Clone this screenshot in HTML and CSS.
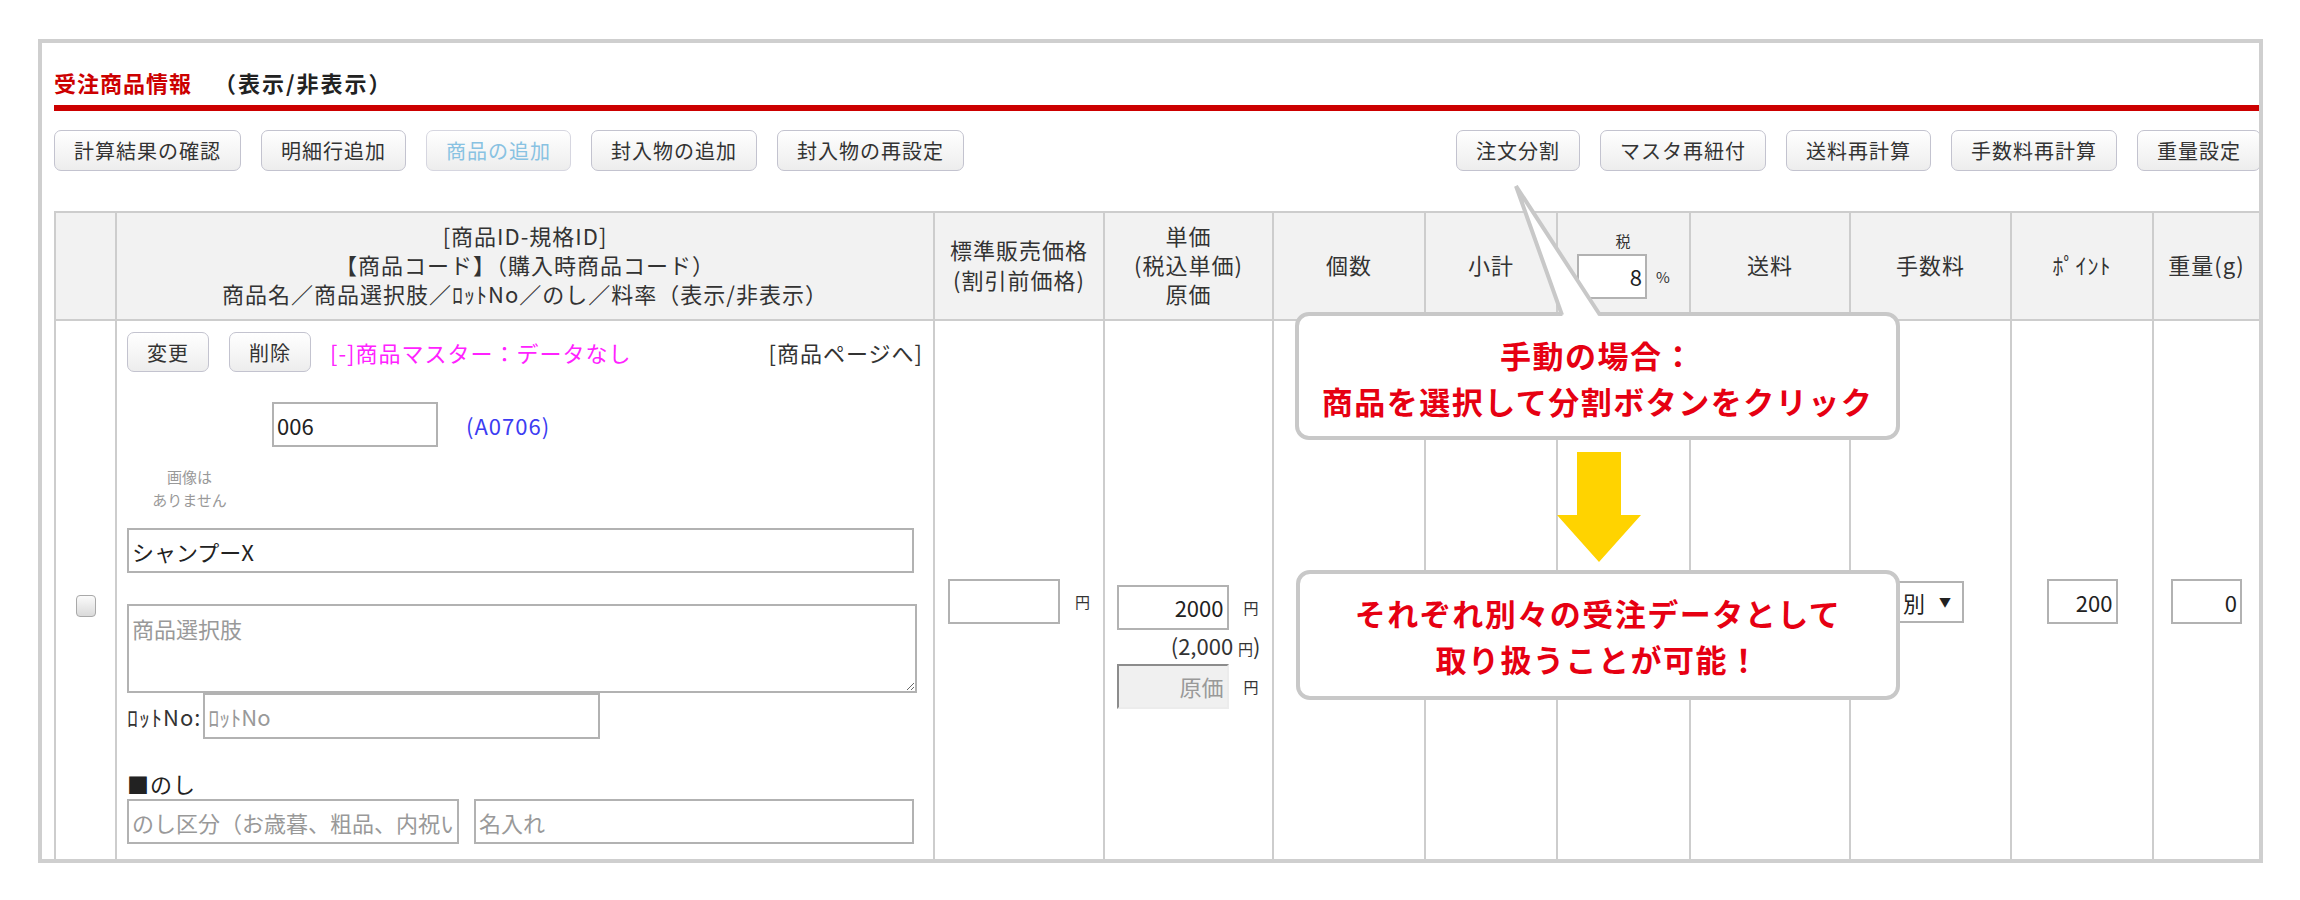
FILE: index.html
```html
<!DOCTYPE html>
<html lang="ja">
<head>
  <meta charset="UTF-8">
  <title>受注商品情報</title>
  <link rel="stylesheet" href="styles.css">
</head>
<body>
  <div class="panel">
    <h2 class="panel-title">受注商品情報<span class="toggle">（表示/非表示）</span></h2>

    <div class="toolbar">
      <div class="btn-group">
        <button class="btn">計算結果の確認</button>
        <button class="btn">明細行追加</button>
        <button class="btn" disabled>商品の追加</button>
        <button class="btn">封入物の追加</button>
        <button class="btn">封入物の再設定</button>
      </div>
      <div class="btn-group">
        <button class="btn">注文分割</button>
        <button class="btn">マスタ再紐付</button>
        <button class="btn">送料再計算</button>
        <button class="btn">手数料再計算</button>
        <button class="btn">重量設定</button>
      </div>
    </div>

    <table class="items">
      <colgroup>
        <col class="c-check">
        <col class="c-product">
        <col class="c-list">
        <col class="c-unit">
        <col class="c-qty">
        <col class="c-sub">
        <col class="c-tax">
        <col class="c-ship">
        <col class="c-fee">
        <col class="c-point">
        <col class="c-weight">
      </colgroup>
      <thead>
        <tr>
          <th></th>
          <th>[商品ID-規格ID]<br>【商品コード】（購入時商品コード）<br>商品名／商品選択肢／ﾛｯﾄNo／のし／料率（表示/非表示）</th>
          <th class="th-two">標準販売価格<br>(割引前価格)</th>
          <th>単価<br>(税込単価)<br>原価</th>
          <th>個数</th>
          <th>小計</th>
          <th class="tax-head">
            <div class="tax-label">税</div>
            <input class="field num-field tax-field" value="8"><span class="pct">%</span>
          </th>
          <th>送料</th>
          <th>手数料</th>
          <th>ﾎﾟｲﾝﾄ</th>
          <th>重量(g)</th>
        </tr>
      </thead>
      <tbody>
        <tr>
          <td><input type="checkbox" class="row-check"></td>
          <td class="product-cell">
            <div class="product-actions">
              <button class="btn btn-small">変更</button>
              <button class="btn btn-small">削除</button>
              <span class="master-missing">[-]商品マスター：データなし</span>
              <a class="product-link">[商品ページへ]</a>
            </div>
            <div class="code-row">
              <input class="field code-field" value="006">
              <span class="code-sub">(A0706)</span>
            </div>
            <div class="no-image">画像は<br>ありません</div>
            <input class="field name-field" value="シャンプーX">
            <textarea class="field option-field" placeholder="商品選択肢"></textarea>
            <div class="lot-row">ﾛｯﾄNo:<input class="field lot-field" placeholder="ﾛｯﾄNo"></div>
            <div class="noshi-label">■のし</div>
            <div class="noshi-row">
              <input class="field noshi-kind" placeholder="のし区分（お歳暮、粗品、内祝い）">
              <input class="field noshi-name" placeholder="名入れ">
            </div>
          </td>
          <td><input class="field num-field price-field"><span class="yen">円</span></td>
          <td class="unit-cell">
            <div class="unit-box">
              <div class="unit-line"><input class="field num-field price-field" value="2000"><span class="yen">円</span></div>
              <div class="tax-in">(2,000 <span class="yen-inline">円</span>)</div>
              <div class="unit-line"><input class="field num-field price-field cost-field" placeholder="原価" disabled><span class="yen">円</span></div>
            </div>
          </td>
          <td></td>
          <td></td>
          <td></td>
          <td></td>
          <td><div class="select-box"><span>別</span><span class="caret">▼</span></div></td>
          <td><input class="field num-field small-field" value="200"></td>
          <td><input class="field num-field small-field" value="0"></td>
        </tr>
      </tbody>
    </table>

    <div class="callout callout-top">
      <svg class="callout-tail" width="110" height="140" viewBox="0 0 110 140">
        <polygon points="12,4 59,135 96,135" fill="#fff"/>
        <polyline points="58,133 12,4 96,133" fill="none" stroke="#c8c8c8" stroke-width="4"/>
      </svg>
      <p>手動の場合：<br>商品を選択して分割ボタンをクリック</p>
    </div>

    <svg class="down-arrow" width="84" height="110" viewBox="0 0 84 110">
      <polygon points="20,0 64,0 64,63 84,63 42,110 0,63 20,63" fill="#ffd300"/>
    </svg>

    <div class="callout callout-bottom">
      <p>それぞれ別々の受注データとして<br>取り扱うことが可能！</p>
    </div>
  </div>
</body>
</html>
```

FILE: styles.css
```css
body {
  margin: 0;
  background: #fff;
  font-family: "Noto Sans CJK JP", "Noto Sans", sans-serif;
  color: #333;
}
.panel {
  position: relative;
  box-sizing: border-box;
  width: 2225px;
  height: 824px;
  margin: 39px 0 0 38px;
  padding-left: 12px;
  border: 4px solid #cfcfcf;
  overflow: hidden;
}
.panel-title {
  margin: 0;
  height: 26px;
  padding: 26px 0 10px;
  line-height: 26px;
  font-size: 22px;
  letter-spacing: 1px;
  color: #cc0000;
  border-bottom: 6px solid #cc0000;
}
.toggle {
  margin-left: 22px;
  letter-spacing: 2px;
  color: #222;
}

/* buttons */
.toolbar {
  display: flex;
  justify-content: space-between;
  margin-top: 19px;
  margin-right: -2px;
}
.btn-group {
  display: flex;
  gap: 20px;
}
.btn {
  height: 41px;
  padding: 0 19px;
  border: 1px solid #c3c3cf;
  border-radius: 7px;
  background: linear-gradient(#ffffff, #ededed);
  font-family: inherit;
  font-size: 20px;
  letter-spacing: 1px;
  color: #333;
  white-space: nowrap;
}
.btn:disabled {
  color: #88c2e2;
  border-color: #d6d6e0;
}
.btn-small {
  height: 40px;
}

/* table */
.items {
  margin-top: 40px;
  width: 2205px;
  table-layout: fixed;
  border-collapse: collapse;
  font-size: 22px;
  letter-spacing: 1px;
}
.c-check { width: 61px; }
.c-product { width: 818px; }
.c-list { width: 170px; }
.c-unit { width: 169px; }
.c-qty { width: 152px; }
.c-sub { width: 132px; }
.c-tax { width: 133px; }
.c-ship { width: 160px; }
.c-fee { width: 161px; }
.c-point { width: 142px; }
.c-weight { width: 107px; }
.items th,
.items td {
  border: 2px solid #cdcdcd;
}
.items th {
  height: 102px;
  padding: 0 0 4px;
  background: #f2f2f2;
  font-weight: normal;
  line-height: 29px;
  white-space: nowrap;
}
.items .th-two {
  line-height: 30px;
}
.items td {
  padding: 0;
  text-align: center;
  vertical-align: middle;
}
.tax-label {
  font-size: 15px;
  line-height: 22px;
  margin-bottom: 2px;
}
.tax-field {
  width: 70px;
  height: 46px;
  vertical-align: middle;
  border-color: #8c8c8c #c4c4c4 #c4c4c4 #8c8c8c;
  font-size: 24px;
}
.pct {
  margin-left: 9px;
  font-size: 15px;
  letter-spacing: 0;
  vertical-align: middle;
}

/* fields */
.field {
  box-sizing: border-box;
  height: 45px;
  padding: 0 3px;
  border: 2px solid #b2b2b2;
  background: #fff;
  font: inherit;
  color: #222;
  letter-spacing: 0;
}
.field::placeholder {
  color: #999;
}
.num-field {
  text-align: right;
}
.row-check {
  appearance: none;
  width: 20px;
  height: 22px;
  margin: 0;
  border: 1px solid #a9a9a9;
  border-radius: 4px;
  background: linear-gradient(#fbfbfb, #dadada);
  vertical-align: middle;
}

/* product cell */
.items .product-cell {
  padding: 11px 10px 38px 10px;
  text-align: left;
  vertical-align: top;
}
.product-actions {
  display: flex;
  align-items: center;
  height: 40px;
}
.product-actions .btn + .btn {
  margin-left: 20px;
}
.master-missing {
  margin-left: 19px;
  color: #ff22ff;
}
.product-link {
  margin-left: auto;
  color: #333;
}
.code-row {
  display: flex;
  align-items: center;
  margin-top: 30px;
  padding-left: 145px;
}
.code-field {
  width: 166px;
}
.code-sub {
  margin-left: 28px;
  color: #3c3cf2;
}
.no-image {
  width: 125px;
  margin-top: 18px;
  font-size: 15px;
  line-height: 23px;
  letter-spacing: 0;
  text-align: center;
  color: #999;
}
.name-field {
  display: block;
  width: 787px;
  margin-top: 17px;
}
.option-field {
  display: block;
  width: 790px;
  height: 89px;
  margin-top: 31px;
  padding: 6px 3px;
}
.lot-row {
  display: flex;
  align-items: center;
  height: 46px;
}
.lot-field {
  width: 397px;
  height: 46px;
  margin-left: 2px;
}
.noshi-label {
  margin-top: 31px;
  line-height: 26px;
  color: #222;
}
.noshi-row {
  display: flex;
  gap: 15px;
  margin-top: 3px;
}
.noshi-kind {
  width: 332px;
}
.noshi-name {
  width: 440px;
}

/* price cells */
.price-field {
  width: 112px;
  vertical-align: middle;
}
.yen {
  margin-left: 15px;
  font-size: 15px;
  letter-spacing: 0;
  vertical-align: middle;
}
.items .unit-cell {
  padding-top: 90px;
}
.unit-box {
  display: inline-block;
  width: 144px;
  text-align: right;
}
.unit-line {
  display: flex;
  align-items: center;
}
.tax-in {
  line-height: 31px;
  letter-spacing: 0;
}
.yen-inline {
  font-size: 15px;
}
.cost-field {
  background: #f0f0f0;
  border-color: #8c8c8c #ececec #ececec #8c8c8c;
}
.small-field {
  width: 71px;
  vertical-align: middle;
}
.select-box {
  display: inline-flex;
  align-items: center;
  box-sizing: border-box;
  width: 67px;
  height: 42px;
  padding-left: 4px;
  border: 2px solid #b2b2b2;
  background: #fff;
  color: #222;
  letter-spacing: 0;
  vertical-align: middle;
}
.caret {
  margin-left: 14px;
  font-size: 12px;
}

/* callouts */
.callout {
  position: absolute;
  box-sizing: border-box;
  background: #fff;
  border: 4px solid #c8c8c8;
  border-radius: 14px;
  text-align: center;
  color: #e60012;
  font-weight: bold;
  font-size: 31px;
  letter-spacing: 1.5px;
  line-height: 46px;
}
.callout p {
  margin: 0;
}
.callout-top {
  left: 1253px;
  top: 269px;
  width: 605px;
  height: 128px;
  padding-top: 16px;
}
.callout-bottom {
  left: 1254px;
  top: 527px;
  width: 604px;
  height: 130px;
  padding-top: 16px;
}
.callout-tail {
  position: absolute;
  left: 205px;
  top: -134px;
}
.down-arrow {
  position: absolute;
  left: 1515px;
  top: 409px;
}
```
